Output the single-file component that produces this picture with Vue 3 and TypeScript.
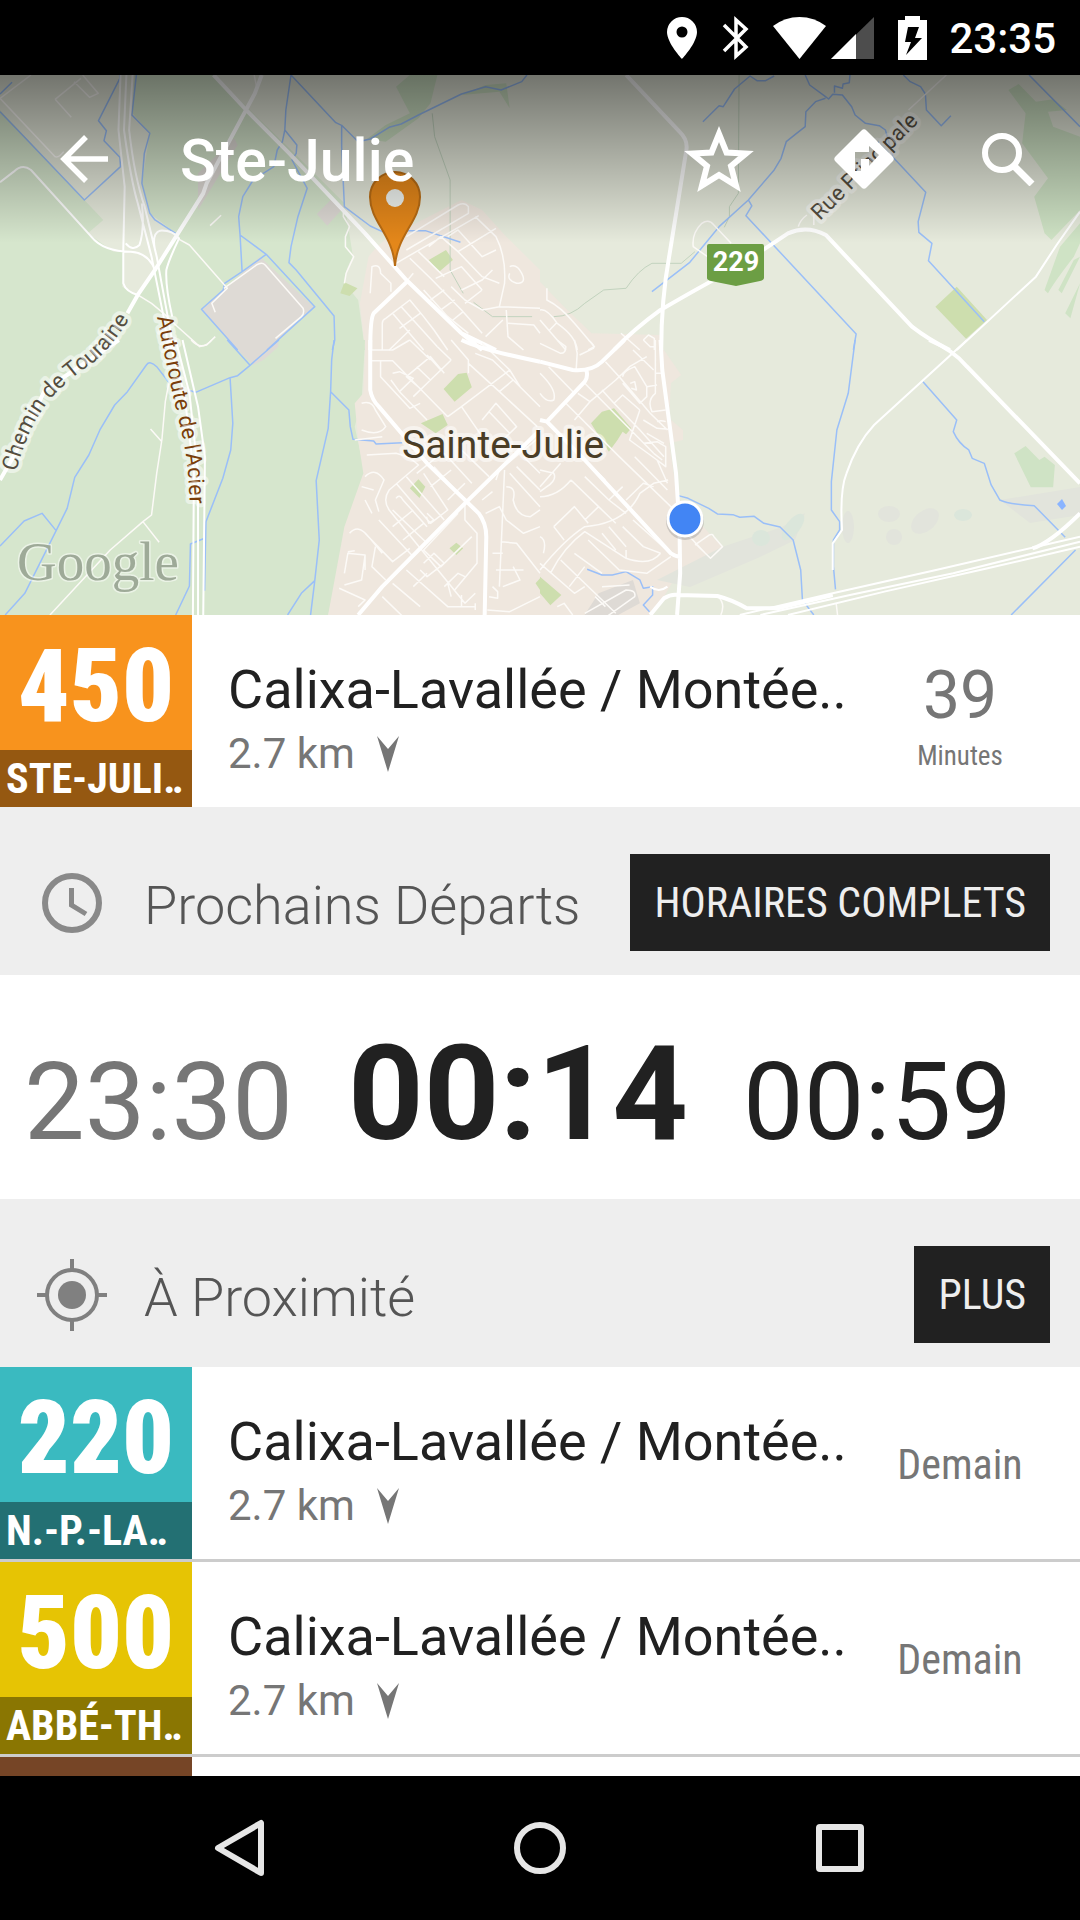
<script setup lang="ts">
interface Tile {
  origin: string
  green: string
  city: string
  dull: string
  parks: string
  woods: string
  creeks: string
  rivers: string
  streets: string
  roads: string
  avenues: string
}

interface Stop {
  id: number
  route: string
  name: string
  color: string
  shade: string
  stop: string
  distance: string
  value?: string
  label: string
}

// Each map tile uses its own 1568 x 840 grid, placed on the 1080 x 540 map.
const tiles: Tile[] = [
  {
    origin: '0,-5',
    green:
      'M0 120L245 390L300 450L255 490L330 545H360L355 650L400 680L450 590L510 490L435 430L412 340L435 190L385 130L390 15H620L840 235L1000 400L1025 560Q1000 600 1000 640L1040 690L1060 840H0Z',
    city: 'M1060 840L1045 700L1070 560Q1100 520 1130 500L1340 390L1400 420L1470 500L1568 600V840Z',
    dull: 'M755 560L910 710L775 840H690L585 720ZM965 385L1000 410L950 467L920 432ZM680 205L690 225L575 420V310Z',
    parks: 'M1245 570L1295 540L1315 570L1275 605ZM1000 637L1038 655L1015 678L988 670Z',
    woods:
      'M1150 50L1190 15H1270L1250 100L1215 145L1120 215L1065 207L1120 165L1190 130ZM1340 75L1410 45L1470 40L1480 115L1450 65Z',
    creeks: 'M1255 130L1262 200L1307 330V600L1345 670M1375 697L1430 740H1545',
    rivers:
      'M0 72L35 37M0 125L70 200L245 390L350 290L348 262L302 212L309 182L286 152L348 25V15M396 15L383 135L435 190L419 250L412 340L435 430L450 450L510 490M845 15L830 120L827 180L820 215L805 240L795 290L735 330L705 380L693 440L697 495L703 605M827 180L862 225L860 250L848 270L892 355L865 440L845 530L839 578L860 600L970 738L972 810L965 840M845 15L975 158L992 166V230L1000 410L1075 468L1110 485L1180 482H1235L1337 517M992 166L1040 215L1075 207L1130 172L1165 162L1215 135L1340 72L1410 50L1455 60L1515 35L1530 15M697 495L773 553L914 710L775 840M773 553L703 605L652 640L648 660L585 718L690 840',
    streets:
      'M90 15L0 85L160 260Q170 265 185 245M160 88L235 25M160 88L207 142M215 35L260 82L285 70L240 15M738 15L745 50M515 505L550 525L660 655L615 700L625 727M650 655L745 585Q760 575 770 585L880 715Q885 730 875 740L800 805M400 675L440 700L475 730L510 765L580 830L600 825L625 800M610 467L642 436M997 415V440L1015 470L1003 500V530L1027 560L1005 610L1000 640M1180 500L1330 405Q1350 395 1360 410V430L1180 540M1150 580L1200 550L1390 437M1380 440L1440 500Q1470 560 1465 640L1450 710L1568 715M1075 670L1080 590Q1105 580 1105 610L1135 640V665M1190 565L1250 625L1340 720L1400 790M1215 545L1290 620M1245 530L1280 500L1330 545L1400 620L1450 640M1330 545L1440 475M1300 500L1330 480L1400 560L1440 540M1265 625L1340 590L1400 660M1230 660L1300 740L1360 790M1200 610L1180 635M1290 660L1250 690M1320 690L1280 720M1345 725L1315 750M1310 650L1350 690L1400 720L1450 710M1340 660L1400 630L1430 600M1400 660L1350 700M1110 840V760Q1110 750 1120 745L1190 690L1230 740L1260 780L1300 840M1140 730L1230 840M1165 710L1270 830M1190 780L1130 840M1220 730L1160 775M1480 590Q1500 580 1515 610Q1530 640 1500 640Q1470 630 1480 610M1475 760L1550 765L1568 790M1470 720L1475 800L1520 840M1410 800L1460 750',
    roads:
      'M350 15L344 180L362 350L358 540V640Q365 665 400 675M367 15L360 180Q380 330 400 400L440 560L475 740L490 840M385 15L375 180Q390 320 420 410L455 560L487 740L505 840M412 400Q420 480 405 525Q385 545 365 520M450 600Q430 548 380 545Q300 545 265 500L90 300Q65 280 40 305L0 337M450 540Q440 490 465 482Q500 480 520 505Q490 570 483 600Q480 650 500 740',
    avenues:
      'M760 15L740 70L600 340L590 370L450 600L400 675L370 730M620 15L715 120L840 250L1060 490L1180 630L1340 790L1400 840M1180 637L1085 730Q1075 745 1075 840M1340 790L1440 840',
  },
  {
    origin: '540,-5',
    green: '',
    city: 'M0 635L70 710L150 790L350 795V840H0Z',
    dull: '',
    parks: 'M1210 650L1298 750L1237 806L1148 710Z',
    woods:
      'M1360 60L1390 42L1440 95L1490 88L1530 120L1475 125L1490 170L1568 200V420L1485 510L1465 490L1435 380L1475 325L1400 220L1410 130ZM1510 530L1568 460V520L1550 560Q1490 640 1475 670L1465 660ZM1568 560L1515 670L1505 660L1550 570ZM1568 640L1540 745L1525 730Z',
    creeks:
      'M578 15L576 370L550 410V440L535 472M450 545L410 580H325Q285 600 250 655L185 660L130 700Q90 740 40 740',
    rivers:
      'M473 155L520 107L532 110L565 57L610 18L630 32H655L680 18M770 15L783 45L829 80L838 87L850 73L878 75L905 110L915 135L945 160L985 167L1003 180L1025 262L1120 367L1098 455L1100 487L1138 520L1128 572L1290 755M900 15L898 38L880 42L878 55L855 48V68M829 85L800 95L772 125L770 170L745 190L715 215L700 265L680 300L605 390L520 470L435 577L325 665M605 390L615 408L598 437L918 792L910 840M1055 15L1075 35L1105 50L1119 72L1122 120L1165 167L1193 137M1420 15L1568 170',
    streets:
      'M500 570L445 530Q440 490 470 460Q490 445 505 465L555 520M750 470Q755 450 775 435M795 465V430M1180 15L1070 120M300 810L315 795L332 805V840M20 655V690Q60 710 100 760L158 830L140 840M0 720Q20 715 50 760Q105 800 108 840M28 780L50 757M0 750L75 840M235 790L290 840',
    roads: 'M1568 425L1500 525L1440 620L1210 840',
    avenues:
      'M250 15L405 185Q430 210 425 240L375 560Q352 690 352 840M215 840Q270 780 350 720Q500 630 560 600L720 490Q775 465 830 495L1080 770Q1130 810 1190 840',
  },
  {
    origin: '0,265',
    green: 'M0 0H1060L1050 180L1030 260L1060 400L1010 560L950 840H0Z',
    city: 'M1060 30L1055 160L1030 190L1040 300L1055 400L1000 560L950 840H1568V30Z',
    dull: 'M660 0L735 75L765 60L808 20V0Z',
    parks:
      'M1288 147L1330 102L1355 98L1370 142L1320 185ZM1222 250L1285 222L1300 255L1265 280ZM1190 445L1215 418L1235 440L1218 474ZM1305 625L1325 608L1345 625L1325 645ZM1555 730L1568 715V750Z',
    woods: '',
    creeks: '',
    rivers:
      'M660 0L726 76L810 0M726 76L690 107L668 113L568 157L545 150M668 113L676 250L670 330L647 415L598 545L594 752M490 127L455 80Q435 60 425 75L370 155L333 195L290 270L258 345L217 412L195 505L163 572L72 760L15 825M0 618L70 543L122 520L163 572M970 0L963 60L960 155L953 265L918 422L927 600L914 722L900 840M914 722L875 760L835 825M960 155L1013 210L1017 260L1025 298L1085 303L1092 312L1168 308M594 595L553 612L550 738L510 825',
    streets:
      'M490 130L480 185L470 300L455 400L440 525L415 545L320 630L145 825M415 545L462 607M437 267L470 305M555 0Q585 35 615 0M1080 30H1140L1190 0M1080 62H1140L1300 230M1105 62V110L1190 205L1220 190M1135 120L1160 155L1200 115L1160 95L1140 100M1160 155L1240 240M1200 170L1250 120L1310 60M1225 150L1180 110L1250 50L1290 100M1250 120L1210 80M1280 90L1240 45M1310 60L1270 20M1190 0L1250 60M1300 230L1340 200L1480 90L1400 10M1340 200L1400 290M1360 70L1450 155L1560 260M1450 155L1490 120L1430 60L1380 40M1490 120L1568 200M1310 0L1360 60V100M1480 90L1510 140M1400 240L1440 190L1500 260L1460 300M1420 215L1480 280M1065 345L1150 340Q1190 350 1215 375L1130 450Q1110 480 1130 510L1350 790M1060 410Q1090 380 1115 420L1090 480L1100 515M1050 440L1085 450M1060 480L1080 520M1050 190Q1080 180 1090 210L1120 260Q1100 290 1050 270M1030 300L1110 290M1015 580Q1040 550 1070 590L1110 640M1060 580L1140 665L1190 625M1100 540L1200 650M1140 510L1240 610M1180 410L1290 540M1150 430L1250 550L1300 510L1230 400M1150 475Q1160 460 1170 480L1240 560M1240 520L1260 540L1245 550L1238 530M1260 380L1340 470M1290 340L1370 430M1330 320L1420 410M1210 400L1270 350M1250 440L1310 390M1300 480L1350 430M1140 560L1200 510M1170 600L1230 550M1000 700L1010 640L1060 645L1050 720L1000 735M985 745L1060 780L1040 800M1010 635L1030 632M1060 645V690M1090 620L1080 680L1120 720M1350 490V540L1385 580V670L1320 750M1330 520L1230 630L1280 680L1370 590M1230 670L1260 640L1290 670L1240 710L1220 690M1180 690L1300 800H1380M1140 730L1220 800M1110 770L1170 830M1200 740L1240 700M1290 740L1330 700L1350 710M1310 770L1300 730M1350 790L1380 760M1340 765V800M1380 810V790M1465 390L1450 740M1440 420L1450 390L1568 290M1400 480L1430 455M1410 520L1450 500L1470 540L1520 580L1568 560M1480 400L1568 500M1500 380L1568 450M1520 350L1568 400M1470 440Q1500 440 1490 480Q1500 530 1540 530L1568 510M1455 605L1500 610L1568 700M1440 690L1520 690M1430 640L1460 640M1430 740L1445 755V775L1420 770M1415 810L1480 815L1568 770M1490 680L1510 720L1460 740',
    roads: 'M530 0L575 200L595 350L590 840M490 0L535 160L563 400L560 840M510 0L550 160L575 400V840',
    avenues:
      'M345 0L130 150L50 330L0 420M1075 0V150Q1080 180 1100 200L1240 370L1390 520Q1412 550 1412 590L1407 840M1040 825L1110 740L1350 490L1568 270M1340 0Q1400 30 1568 65',
  },
  {
    origin: '540,265',
    green: '',
    city: 'M0 30H360L380 60L410 105L380 130L375 235L415 270V300L375 310L398 470L500 590L530 620L400 700L320 840H0Z',
    dull: 'M170 760L270 720L290 790L200 840H120Z',
    parks: 'M148 250L180 215L215 205L265 265L250 283L240 275L225 300L200 335ZM0 710L62 765L30 796L0 760Z',
    woods: 'M1377 340L1410 318L1450 360L1465 350L1495 375L1490 442H1425Z',
    creeks: '',
    rivers:
      'M915 0L895 160L862 270L846 425V510L870 545V570L852 600V680L858 748M402 467L430 475L490 505L515 522L560 524L580 532L622 529L650 550L697 561L735 600L757 690L762 780L795 825M1112 125L1210 240L1200 275Q1215 310 1245 330L1255 355L1290 370L1310 435L1335 480Q1360 493 1435 497L1525 592M1555 630L1368 825M137 688L180 705H210L250 695L290 720L300 745L327 740V765L300 795L318 815',
    streets:
      'M515 768Q540 790 525 825M860 790L864 825M450 615L492 585Q500 580 505 590L530 620L495 655L450 610M425 580L480 640M335 0V160Q310 180 325 215L365 210M335 100H355M0 10L60 40Q75 40 75 20L50 0M105 90L108 40L100 0M115 45L155 25Q160 15 140 0M0 100Q50 150 40 180Q20 190 0 160M25 80L100 160M75 190L230 350L400 520M130 130L330 340M145 185L220 120L260 80L310 50M190 65L230 110L320 220L370 270M110 160L145 185L100 240M180 150L215 190L290 270L360 350M215 190L240 165L290 210M240 110Q240 95 275 80L310 140V170L290 190L240 130M262 130L275 125L280 150L265 145M310 140L340 135M290 210L260 300L340 360L370 430M310 280L360 310M300 310L340 305L365 320V380L340 360M330 340L355 360M270 30L330 90M300 0L320 20H335M275 350L370 450M300 240L340 265L372 268M340 245Q350 240 365 245M100 330L190 420M60 370L0 440M130 410L200 480L250 520M90 420L170 500L220 550M0 390L40 400Q50 420 20 440L0 455M0 470Q50 470 90 420M170 500L130 540M200 480L240 440M250 480L300 430L330 440M0 590Q20 600 10 640M0 690Q70 600 130 560Q250 550 290 460L330 430L372 420M40 560L100 500L140 550M70 600L40 560M30 700Q70 620 130 575L250 655Q320 680 350 640M0 670L100 760L130 740M100 640L180 700M60 660L160 760L220 820M140 600L230 690L310 700L380 650M200 560L250 620M180 580L220 630M240 560L300 620L350 640M270 540L390 650M250 630V655M85 740L130 680M130 820L250 750Q280 750 275 770L180 840M180 740L260 735M50 800L70 790L95 825M160 770L190 800',
    roads:
      'M1240 0L970 255Q920 310 890 400Q870 450 877 570L850 610V690M580 825L850 760L1150 690L1568 590M640 825L900 765L1200 700L1568 605M720 825L1000 755L1300 685L1568 620M320 740Q345 760 370 740',
    avenues:
      'M350 0L355 90L395 400L405 560L407 700L398 825M1130 0Q1200 30 1240 80L1568 430M320 825L360 775Q380 762 400 765L515 768Q560 780 600 805H690L850 765M1430 625Q1480 610 1568 520M0 240L20 245L130 360L380 640Q395 650 407 650M20 245L130 125Q140 110 135 92M0 65L95 90Q150 95 180 65L245 0',
  },
]

const place = (tile: Tile): string => `translate(${tile.origin}) scale(.3444 .3333)`

const current: Stop = {
  id: 1,
  route: '450',
  name: 'STE-JULI‥',
  color: '#f8931d',
  shade: '#955811',
  stop: 'Calixa-Lavallée / Montée..',
  distance: '2.7 km',
  value: '39',
  label: 'Minutes',
}

const nearby: Stop[] = [
  {
    id: 2,
    route: '220',
    name: 'N.-P.-LA‥',
    color: '#3abac0',
    shade: '#237073',
    stop: 'Calixa-Lavallée / Montée..',
    distance: '2.7 km',
    label: 'Demain',
  },
  {
    id: 3,
    route: '500',
    name: 'ABBÉ-TH‥',
    color: '#e6c404',
    shade: '#8a7602',
    stop: 'Calixa-Lavallée / Montée..',
    distance: '2.7 km',
    label: 'Demain',
  },
  { id: 4, route: '', name: '', color: '#764526', shade: '#764526', stop: '', distance: '', label: '' },
]

const departures = [
  { time: '23:30', state: 'past' },
  { time: '00:14', state: 'next' },
  { time: '00:59', state: 'later' },
]
</script>

<template>
  <div class="screen">
    <div class="status">
      <svg width="30" height="42" viewBox="0 0 30 42" fill="#fff">
        <path fill-rule="evenodd" d="M15 0A15 15 0 0 0 0 15C0 26 15 42 15 42S30 26 30 15A15 15 0 0 0 15 0ZM15 9.500a5.500 5.500 0 1 1 0 11a5.500 5.500 0 0 1 0-11Z" />
      </svg>
      <svg width="28" height="44" viewBox="0 0 28 44" fill="none" stroke="#fff" stroke-width="3.500">
        <path d="M3 9L25 31L15 40V4L25 13L3 35" />
      </svg>
      <div class="signal">
        <svg width="53" height="42" viewBox="0 0 53 42" fill="#fff"><path d="M0 9Q12 0 26.500 0T53 9L26.500 42Z" /></svg>
        <svg width="43" height="42" viewBox="0 0 43 42">
          <path d="M43 0V42H0Z" fill="#4d4d4d" />
          <path d="M25 17V42H0Z" fill="#fff" />
        </svg>
      </div>
      <svg width="29" height="44" viewBox="0 0 29 44" fill="#fff">
        <path fill-rule="evenodd" d="M7 0H22V4H29V44H0V4H7ZM10 11L7 26H13L8 39L24 22H17L21 11Z" />
      </svg>
      <time class="clock">23:35</time>
    </div>

    <section class="map-area">
      <svg class="map" viewBox="0 0 1080 540" preserveAspectRatio="xMidYMid slice">
        <defs>
          <path id="chemin" d="M16 397Q30 344 56 318Q74 300 94 287Q116 268 134 236" />
          <path id="autoroute" d="M157 242L171 312L183 364Q190 398 190 450" />
          <path id="principale" d="M820 146L930 36" />
        </defs>
        <rect width="1080" height="540" fill="#e6eadc" />
        <g v-for="tile in tiles" :key="'a' + tile.origin" :transform="place(tile)">
          <path :d="tile.green" fill="#d6e6cd" />
          <path :d="tile.woods" fill="#cfe3c5" />
          <path :d="tile.city" fill="#efe7de" />
          <path :d="tile.dull" fill="#dedad5" />
          <path :d="tile.parks" fill="#cddeae" />
        </g>
        <g fill="#e2e4dc">
          <path d="M657 505L722 472L782 452L805 438L795 465L760 482L690 512Z" />
          <ellipse cx="889" cy="439" rx="11" ry="8" />
          <ellipse cx="925" cy="446" rx="10" ry="16" transform="rotate(50 925 446)" />
          <ellipse cx="894" cy="462" rx="8" ry="8" />
          <ellipse cx="848" cy="452" rx="6" ry="16" />
          <path d="M1000 425L1080 412V440L1030 448Z" />
        </g>
        <g fill="#dbe6db">
          <ellipse cx="761" cy="463" rx="9" ry="8" />
          <ellipse cx="793" cy="452" rx="7" ry="16" transform="rotate(38 793 452)" />
          <ellipse cx="963" cy="440" rx="9" ry="6" />
        </g>
        <path d="M1057 429L1062 424L1066 431L1062 435Z" fill="#8ab4ff" />
        <g v-for="tile in tiles" :key="'b' + tile.origin" :transform="place(tile)" class="lines">
          <path :d="tile.creeks" stroke="#c2d3be" stroke-width="1" />
          <path :d="tile.rivers" stroke="#9abff8" stroke-width="1.500" />
          <path :d="tile.streets" stroke="#fcfaf7" stroke-width="1.500" />
          <path :d="tile.roads" stroke="#fff" stroke-width="2" />
          <path :d="tile.avenues" stroke="#fff" stroke-width="4" />
        </g>

        <g class="labels">
          <text class="road"><textPath href="#chemin">Chemin de Touraine</textPath></text>
          <text class="road highway"><textPath href="#autoroute">Autoroute de l'Acier</textPath></text>
          <text class="road"><textPath href="#principale">Rue Principale</textPath></text>
          <text class="town" x="402" y="383">Sainte-Julie</text>
          <text class="brand" x="17" y="505">Google</text>
        </g>
        <path d="M709 169H762Q764 169 764 171V203Q764 205 760 206L736 211L711 206Q707 205 707 203V171Q707 169 709 169Z" fill="#6c9e44" />
        <text class="shield" x="736" y="196">229</text>
        <path
          fill-rule="evenodd"
          d="M395 191C393 160 370 146 370 122A25 25 0 0 1 420 122C420 146 397 160 395 191Z"
          fill="#e4871a"
          stroke="#b86c14"
          stroke-width="2"
        />
        <circle cx="395" cy="123" r="9" fill="#eef2ee" />
        <circle cx="685" cy="446" r="19" fill="#777" opacity=".3" />
        <circle cx="685" cy="444" r="17" fill="#4285f4" stroke="#fff" stroke-width="3" />
      </svg>

      <header class="appbar">
        <button class="back" aria-label="Retour">
          <svg width="48" height="48" viewBox="0 0 48 48" fill="none" stroke="#fff" stroke-width="5.500">
            <path d="M48 24H4M26 2L4 24L26 46" />
          </svg>
        </button>
        <h1>Ste-Julie</h1>
        <button class="action" aria-label="Favori">
          <svg width="72" height="70" viewBox="1 0 72 70" fill="none" stroke="#fff" stroke-width="6">
            <path d="M36 10L43.500 28.500L63 29.500L48 42L53 61.500L36 51L19 61.500L24 42L9 29.500L28.500 28.500Z" />
          </svg>
        </button>
        <button class="action" aria-label="Itinéraire">
          <svg width="60" height="60" viewBox="0 0 60 60" fill="#fff">
            <path fill-rule="evenodd" d="M27.500 1.500Q30 -1 32.500 1.500L58.500 27.500Q61 30 58.500 32.500L32.500 58.500Q30 61 27.500 58.500L1.500 32.500Q-1 30 1.500 27.500ZM21 23V42H27V30H35V37L45 26L35 17V23Z" />
          </svg>
        </button>
        <button class="action" aria-label="Rechercher">
          <svg width="54" height="54" viewBox="0 0 54 54" fill="none" stroke="#fff">
            <circle cx="21" cy="21" r="17" stroke-width="6" />
            <path d="M34 35L36 37L51 52" stroke-width="7" />
          </svg>
        </button>
      </header>
    </section>

    <main class="content">
      <article class="row">
        <div class="badge" :style="{ background: current.color }">
          <strong>{{ current.route }}</strong>
          <span :style="{ background: current.shade }">{{ current.name }}</span>
        </div>
        <div class="info">
          <h2>{{ current.stop }}</h2>
          <p>
            {{ current.distance }}
            <svg width="22" height="36" viewBox="0 0 22 36" fill="#767676"><path d="M0 0L11 13L22 0L11 36Z" /></svg>
          </p>
        </div>
        <div class="eta">
          <b>{{ current.value }}</b>
          <small>{{ current.label }}</small>
        </div>
      </article>

      <div class="section">
        <svg width="60" height="60" viewBox="0 0 60 60" fill="none" stroke="#898989">
          <circle cx="30" cy="30" r="27" stroke-width="6" />
          <path d="M29.500 15V32L44 41" stroke-width="5" />
        </svg>
        <h2>Prochains Départs</h2>
        <button>HORAIRES COMPLETS</button>
      </div>

      <ul class="times">
        <li v-for="item in departures" :key="item.time" :class="item.state">{{ item.time }}</li>
      </ul>

      <div class="section">
        <svg class="locate" width="72" height="72" viewBox="0 0 72 72" fill="none" stroke="#808080">
          <circle cx="36" cy="36" r="25" stroke-width="4" />
          <circle cx="36" cy="36" r="14" fill="#808080" stroke="none" />
          <path d="M36 0V10M36 62V72M1 36H10M62 36H71" stroke-width="4" />
        </svg>
        <h2>À Proximité</h2>
        <button>PLUS</button>
      </div>

      <article v-for="item in nearby" :key="item.id" class="row divided">
        <div class="badge" :style="{ background: item.color }">
          <template v-if="item.route">
            <strong>{{ item.route }}</strong>
            <span :style="{ background: item.shade }">{{ item.name }}</span>
          </template>
        </div>
        <template v-if="item.route">
          <div class="info">
            <h2>{{ item.stop }}</h2>
            <p>
              {{ item.distance }}
              <svg width="22" height="36" viewBox="0 0 22 36" fill="#767676"><path d="M0 0L11 13L22 0L11 36Z" /></svg>
            </p>
          </div>
          <div class="eta later">{{ item.label }}</div>
        </template>
      </article>
    </main>

    <nav class="navbar">
      <button aria-label="Précédent">
        <svg width="60" height="60" viewBox="0 0 60 60"><path d="M51 5V55L8 30Z" /></svg>
      </button>
      <button aria-label="Accueil">
        <svg width="60" height="60" viewBox="0 0 60 60"><circle cx="30" cy="30" r="23" /></svg>
      </button>
      <button aria-label="Applications">
        <svg width="60" height="60" viewBox="0 0 60 60"><rect x="9" y="9" width="42" height="42" rx="1" /></svg>
      </button>
    </nav>
  </div>
</template>

<style>
body {
  margin: 0;
  background: #000;
}
</style>

<style scoped>
.screen {
  display: flex;
  flex-direction: column;
  height: 100vh;
  overflow: hidden;
  background: #fff;
  color: #212121;
  font-family: Roboto, 'Liberation Sans', sans-serif;
}

h1,
h2,
p,
ul {
  margin: 0;
  padding: 0;
}

svg {
  display: block;
  flex: none;
}

button {
  display: flex;
  align-items: center;
  justify-content: center;
  margin: 0;
  padding: 0;
  border: 0;
  background: none;
}

.status {
  display: flex;
  flex: none;
  align-items: center;
  justify-content: flex-end;
  gap: 24px;
  height: 75px;
  padding-right: 24px;
  background: #000;
  color: #fff;
}

.signal {
  display: flex;
  gap: 5px;
}

.clock {
  margin-left: -2px;
  padding-top: 2px;
  font-size: 42px;
  font-weight: 500;
  line-height: 48px;
}

.map-area {
  position: relative;
  flex: none;
  height: 540px;
  overflow: hidden;
}

.map {
  width: 100%;
  height: 100%;
}

.lines path {
  fill: none;
  stroke-linejoin: round;
  vector-effect: non-scaling-stroke;
}

.labels text {
  paint-order: stroke;
  stroke: rgba(255, 255, 255, 0.5);
  stroke-width: 8px;
  stroke-linejoin: round;
}

.labels .road {
  font-size: 22px;
  fill: #544d40;
}

.labels .highway {
  fill: #7a3e0a;
}

.labels .town {
  font-size: 39px;
  fill: #4a3d26;
}

.labels .brand {
  font-family: 'Liberation Serif', serif;
  font-size: 55px;
  fill: #9eaa98;
  stroke-width: 3px;
}

.shield {
  font-size: 27px;
  font-weight: 700;
  fill: #fff;
  text-anchor: middle;
}

.appbar {
  position: absolute;
  top: 0;
  left: 0;
  right: 0;
  display: flex;
  align-items: flex-start;
  background: linear-gradient(rgba(0, 0, 0, 0.5), rgba(0, 0, 0, 0));
}

.appbar .back,
.appbar .action {
  flex: none;
  width: 144px;
  height: 168px;
}

.appbar .back {
  width: 168px;
}

.appbar h1 {
  flex: 1;
  padding-left: 12px;
  color: #fff;
  font-size: 59px;
  font-weight: 500;
  line-height: 172px;
  height: 168px;
}

.content {
  flex: 1;
  min-height: 0;
  overflow: hidden;
}

.row {
  display: flex;
  height: 192px;
  background: #fff;
}

.divided + .divided {
  border-top: 3px solid #ccc;
}

.badge {
  display: flex;
  flex: none;
  flex-direction: column;
  width: 192px;
  color: #fff;
  font-family: 'Roboto Condensed', Roboto, sans-serif;
  font-weight: 700;
}

.badge strong {
  flex: 1;
  padding-top: 8px;
  font-size: 102px;
  line-height: 127px;
  text-align: center;
}

.badge span {
  flex: none;
  padding-left: 6px;
  font-size: 42px;
  line-height: 57px;
  white-space: nowrap;
}

.info {
  flex: 1;
  min-width: 0;
  padding: 43px 0 0 36px;
  white-space: nowrap;
}

.info h2 {
  font-size: 54px;
  font-weight: 400;
  line-height: 64px;
}

.info p {
  display: flex;
  align-items: center;
  gap: 22px;
  color: #767676;
  font-size: 42px;
  line-height: 64px;
}

.eta {
  display: flex;
  flex: none;
  flex-direction: column;
  align-items: center;
  width: 192px;
  margin-right: 24px;
  padding-top: 41px;
  box-sizing: border-box;
  color: #767676;
}

.eta b {
  font-size: 66px;
  font-weight: 400;
  line-height: 80px;
}

.eta small {
  font-family: 'Roboto Condensed', Roboto, sans-serif;
  font-size: 27px;
  line-height: 40px;
}

.eta.later {
  justify-content: center;
  padding-top: 2px;
  font-family: 'Roboto Condensed', Roboto, sans-serif;
  font-size: 42px;
}

.section {
  display: flex;
  align-items: center;
  gap: 42px;
  height: 97px;
  padding: 47px 30px 24px 42px;
  background: #eee;
}

.section .locate {
  margin: 0 -6px;
}

.section h2 {
  flex: 1;
  padding-top: 6px;
  color: #555;
  font-size: 54px;
  font-weight: 300;
  line-height: 64px;
  white-space: nowrap;
}

.section button {
  height: 97px;
  padding: 0 24px;
  background: #212121;
  color: #eee;
  font-family: 'Roboto Condensed', Roboto, sans-serif;
  font-size: 42px;
  white-space: nowrap;
}

.times {
  display: flex;
  align-items: baseline;
  gap: 55px;
  height: 183px;
  padding: 41px 24px 0;
  background: #fff;
  list-style: none;
}

.times li {
  font-size: 108px;
  line-height: 156px;
}

.times .past {
  color: #767676;
}

.times .next {
  font-size: 132px;
  font-weight: 700;
}

.navbar {
  display: flex;
  flex: none;
  justify-content: center;
  height: 144px;
  background: #000;
}

.navbar button {
  width: 300px;
}

.navbar svg {
  fill: none;
  stroke: #e6e6e6;
  stroke-width: 6px;
  stroke-linejoin: round;
}
</style>
